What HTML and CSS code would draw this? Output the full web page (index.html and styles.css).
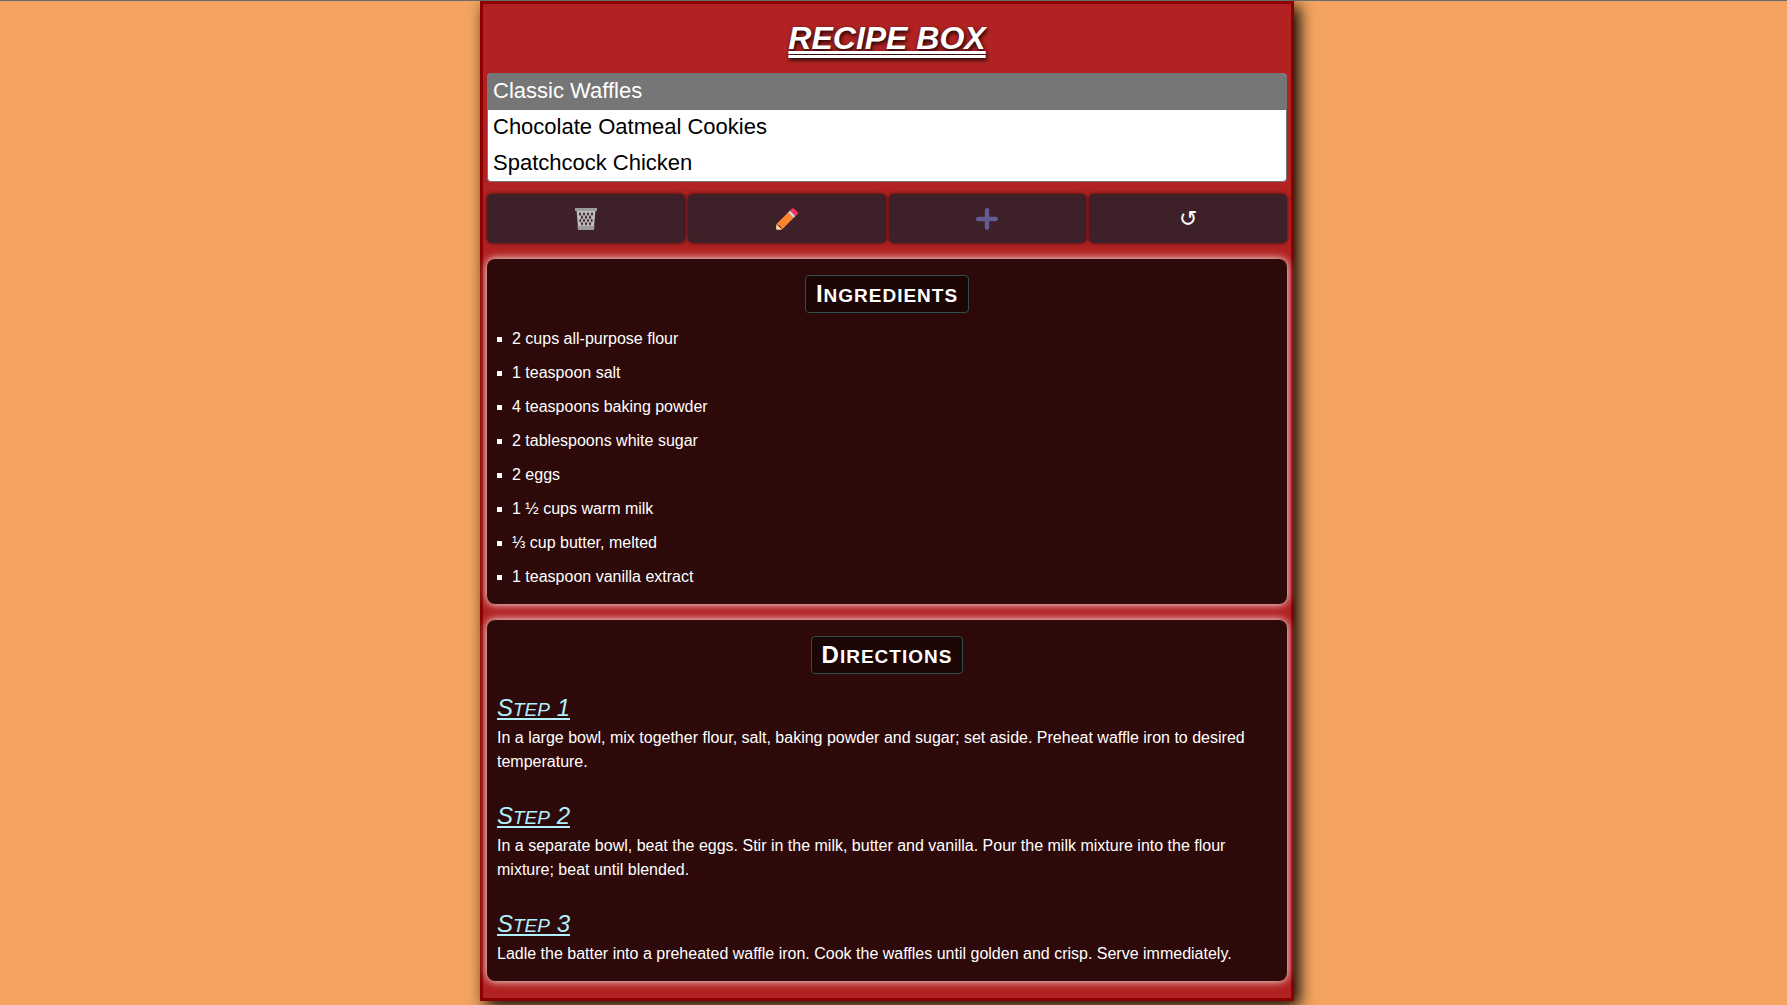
FILE: index.html
```html
<!DOCTYPE html>
<html lang="en">
<head>
<meta charset="utf-8">
<meta name="viewport" content="width=device-width, initial-scale=1">
<title>Recipe Box</title>
<link rel="stylesheet" href="styles.css">
</head>
<body>
<main class="box">
  <h1 class="title">Recipe Box</h1>
  <select class="recipes" size="3" aria-label="Recipes">
    <option selected>Classic Waffles</option>
    <option>Chocolate Oatmeal Cookies</option>
    <option>Spatchcock Chicken</option>
  </select>
  <div class="actions">
    <button class="action" type="button" aria-label="Delete recipe">
      <svg class="icon" viewBox="0 0 22 22" aria-hidden="true">
        <path d="M1.500 2h19L18.800 21h-15.600z" fill="#bdbdbd"/>
        <path d="M0 0h22v3h-22zM2.500 18h17l-.5 4h-16z" fill="#9b9b9b"/>
        <g fill="#3d2028">
          <path d="M5 4l1.200 2-1.200 2-1.200-2zM9 4l1.200 2L9 8 7.800 6zM13 4l1.200 2L13 8l-1.200-2zM17 4l1.200 2L17 8l-1.200-2z"/>
          <path d="M7 7l1.200 2.200L7 11.400 5.800 9.200zM11 7l1.200 2.200-1.200 2.200-1.200-2.200zM15 7l1.200 2.200-1.200 2.200-1.200-2.200z"/>
          <path d="M5.200 10.500l1.100 2-1.100 2-1-2zM9 10.500l1.200 2L9 14.500l-1.200-2zM13 10.500l1.200 2-1.200 2-1.200-2zM16.800 10.500l1 2-1 2-1.100-2z"/>
          <path d="M7 13.800l1.200 2L7 17.800l-1.200-2zM11 13.800l1.200 2-1.200 2-1.200-2zM15 13.800l1.200 2-1.200 2-1.200-2z"/>
        </g>
      </svg>
    </button>
    <button class="action" type="button" aria-label="Edit recipe">
      <svg class="icon" viewBox="0 0 22 22" aria-hidden="true">
        <path d="M0.500 16L6 21.500l-4 .5Q0 22 0 20z" fill="#ffd590"/>
        <path d="M12 4.500L17.500 10 6 21.500 4.500 18.200.5 16z" fill="#ff822d"/>
        <path d="M12 4.500l2-2L19.500 8l-2 2z" fill="#d3d3d3"/>
        <path d="M14 2.500l1.600-1.600q1.400-1.200 2.800 0l3 3q1.200 1.200 0 2.500L19.500 8z" fill="#fb2f60"/>
      </svg>
    </button>
    <button class="action" type="button" aria-label="Add recipe">
      <svg class="icon" viewBox="0 0 22 22" aria-hidden="true">
        <path d="M11 2.200v17.600M2.200 11h17.600" stroke="#635994" stroke-width="4.400" stroke-linecap="round"/>
      </svg>
    </button>
    <button class="action" type="button" aria-label="Reset recipes">↺</button>
  </div>
  <section class="panel">
    <h2 class="heading">I<span class="caps">ngredients</span></h2>
    <ul class="ingredients">
      <li>2 cups all-purpose flour</li>
      <li>1 teaspoon salt</li>
      <li>4 teaspoons baking powder</li>
      <li>2 tablespoons white sugar</li>
      <li>2 eggs</li>
      <li>1 ½ cups warm milk</li>
      <li>⅓ cup butter, melted</li>
      <li>1 teaspoon vanilla extract</li>
    </ul>
  </section>
  <section class="panel">
    <h2 class="heading">D<span class="caps">irections</span></h2>
    <div class="steps">
      <article>
        <h3 class="step">S<span class="caps">tep</span> 1</h3>
        <p>In a large bowl, mix together flour, salt, baking powder and sugar; set aside. Preheat waffle iron to desired temperature.</p>
      </article>
      <article>
        <h3 class="step">S<span class="caps">tep</span> 2</h3>
        <p>In a separate bowl, beat the eggs. Stir in the milk, butter and vanilla. Pour the milk mixture into the flour mixture; beat until blended.</p>
      </article>
      <article>
        <h3 class="step">S<span class="caps">tep</span> 3</h3>
        <p>Ladle the batter into a preheated waffle iron. Cook the waffles until golden and crisp. Serve immediately.</p>
      </article>
    </div>
  </section>
</main>
</body>
</html>
```
FILE: styles.css
```css
* {
  box-sizing: border-box;
  margin: 0;
  padding: 0;
}

body {
  min-height: 100vh;
  padding-right: 13px;
  border-top: 1px solid #696969;
  background: sandybrown;
  color: white;
  font: 16px/24px "Liberation Sans", Arial, sans-serif;
}

.box {
  max-width: 814px;
  margin: 0 auto;
  padding: 10px 4px 17px;
  border: 3px solid darkred;
  background: firebrick;
  box-shadow: 5px 5px 15px black;
}

.title {
  margin-bottom: 11px;
  font-size: 32px;
  font-style: italic;
  line-height: 48px;
  text-align: center;
  text-decoration: underline double;
  text-shadow: 1px 2px 4px black;
  text-transform: uppercase;
}

.recipes {
  display: block;
  width: 100%;
  height: 109px;
  border: 1px solid #767676;
  border-radius: 4px;
  background: white;
  color: black;
  font: 22px "Liberation Sans", Arial, sans-serif;
  overflow: hidden;
}

.recipes option {
  min-height: 36px;
  padding: 4px 5px 6px;
}

.recipes option:checked {
  background: #767676 linear-gradient(#767676, #767676);
  color: white;
}

.actions {
  display: grid;
  grid-template-columns: repeat(4, 1fr);
  gap: 3px;
  margin: 12px 0 16px;
}

.action {
  display: flex;
  align-items: center;
  justify-content: center;
  height: 49px;
  border: 0;
  border-radius: 5px;
  background: #3d2028;
  box-shadow: 0 0 4px rgba(0, 0, 0, 0.7);
  color: white;
  font: 22px "Liberation Sans", "DejaVu Sans", sans-serif;
}

.icon {
  width: 22px;
  height: 22px;
}

.panel {
  padding: 16px 10px 15px;
  border-radius: 8px;
  background: #2d0909;
  box-shadow: 0 0 8px white;
}

.panel + .panel {
  margin-top: 16px;
}

.heading {
  width: fit-content;
  margin: 0 auto;
  padding: 0 10px;
  border: 1px solid darkslategray;
  border-radius: 4px;
  background: #1b0505;
  font-size: 24px;
  letter-spacing: 1px;
  line-height: 36px;
}

.caps {
  font-size: 19px;
  line-height: 24px;
  text-transform: uppercase;
}

.ingredients {
  display: grid;
  gap: 10px;
  margin-top: 14px;
  list-style: none;
}

.ingredients li {
  display: flex;
  align-items: center;
  gap: 10px;
}

.ingredients li::before {
  content: "";
  width: 5px;
  height: 5px;
  background: white;
}

.steps {
  display: grid;
  gap: 24px;
  margin-top: 16px;
}

.step {
  color: #b0f0ff;
  font-size: 24px;
  font-style: italic;
  font-weight: normal;
  line-height: 36px;
  text-decoration: underline;
}
```
